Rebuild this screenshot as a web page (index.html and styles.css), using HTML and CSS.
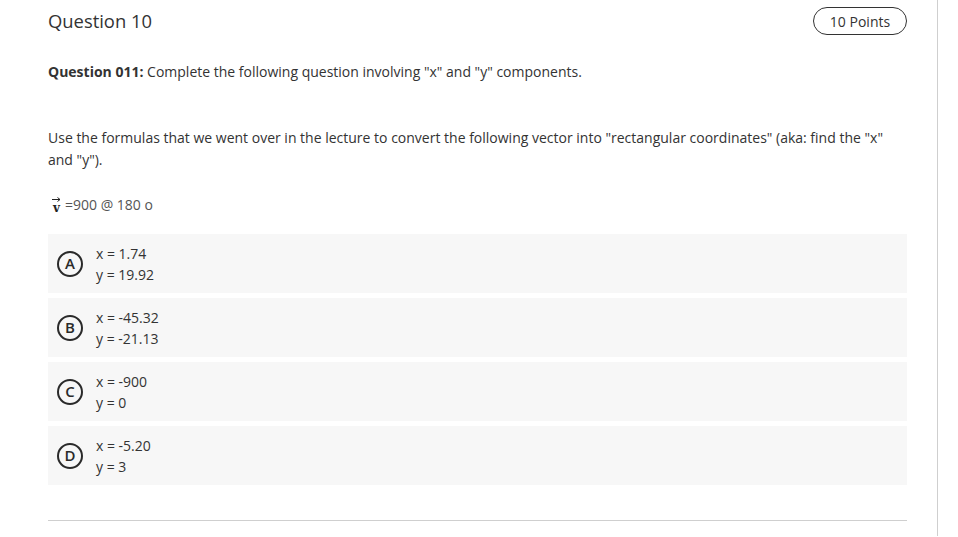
FILE: index.html
```html
<!DOCTYPE html>
<html>
<head>
<meta charset="utf-8">
<link rel="stylesheet" href="styles.css">
</head>
<body>
<div class="page">
  <div class="content">
    <div class="header">
      <h1 class="title">Question 10</h1>
      <span class="points">10 Points</span>
    </div>
    <p class="lead"><b>Question 011:</b> Complete the following question involving "x" and "y" components.</p>
    <p class="body">Use the formulas that we went over in the lecture to convert the following vector into "rectangular coordinates" (aka: find the "x" and "y").</p>
    <p class="vector"><span class="vec"><svg class="arrow" width="9" height="5" viewBox="0 0 9 5"><path d="M0 2.5H8M5.5 0.5L8 2.5L5.5 4.5" fill="none" stroke="#222" stroke-width="1"/></svg><span class="v">v</span></span>=900 @ 180 o</p>
    <div class="options">
      <div class="option"><span class="letter">A</span><div class="vals"><div>x = 1.74</div><div>y = 19.92</div></div></div>
      <div class="option"><span class="letter">B</span><div class="vals"><div>x = -45.32</div><div>y = -21.13</div></div></div>
      <div class="option"><span class="letter">C</span><div class="vals"><div>x = -900</div><div>y = 0</div></div></div>
      <div class="option"><span class="letter">D</span><div class="vals"><div>x = -5.20</div><div>y = 3</div></div></div>
    </div>
    <div class="rule"></div>
  </div>
  <div class="sidebar"></div>
</div>
</body>
</html>
```
FILE: styles.css
```css
html, body { margin: 0; padding: 0; background: #fff; }
body { font-family: "Open Sans", sans-serif; color: #333; width: 958px; height: 537px; overflow: hidden; }
.page { display: flex; height: 537px; }
.content { width: 859px; margin-left: 48px; }
.sidebar { width: 1px; background: #cfcfcf; margin-left: 30px; height: 536px; }
.header { display: flex; justify-content: space-between; align-items: center; padding-top: 7px; height: 28px; }
.title { font-size: 18.4px; font-weight: 400; margin: 0; color: #333; line-height: 28px; }
.points { border: 1px solid #333; border-radius: 14px; height: 26px; width: 92px; display: flex; align-items: center; justify-content: center; font-size: 14px; color: #333; }
.lead { font-size: 14px; margin: 27px 0 0; line-height: 20px; }
.lead b { font-weight: 700; }
.body { font-size: 14px; margin: 45px 0 0; line-height: 22px; width: 845px; }
.vector { font-size: 14px; margin: 24px 0 0; line-height: 20px; color: #555; display: flex; align-items: center; }
.vec { display: inline-flex; flex-direction: column; align-items: center; margin-left: 4px; margin-right: 4px; font-family: "DejaVu Serif", serif; }
.vec .arrow { display: block; margin-bottom: 1px; }
.vec .v { font-size: 12px; font-weight: 700; line-height: 10px; color: #222; }
.options { margin-top: 19px; display: flex; flex-direction: column; gap: 5px; }
.option { background: #f7f7f7; height: 59px; display: flex; align-items: center; padding-left: 9px; }
.letter { width: 22px; height: 22px; border: 2px solid #2a2a2a; border-radius: 50%; display: flex; align-items: center; justify-content: center; font-size: 15px; font-weight: 600; color: #2a2a2a; line-height: 1; }
.vals { margin-left: 13px; font-size: 14px; line-height: 21px; color: #333; }
.rule { height: 1px; background: #cfcfcf; margin-top: 35px; }
```
